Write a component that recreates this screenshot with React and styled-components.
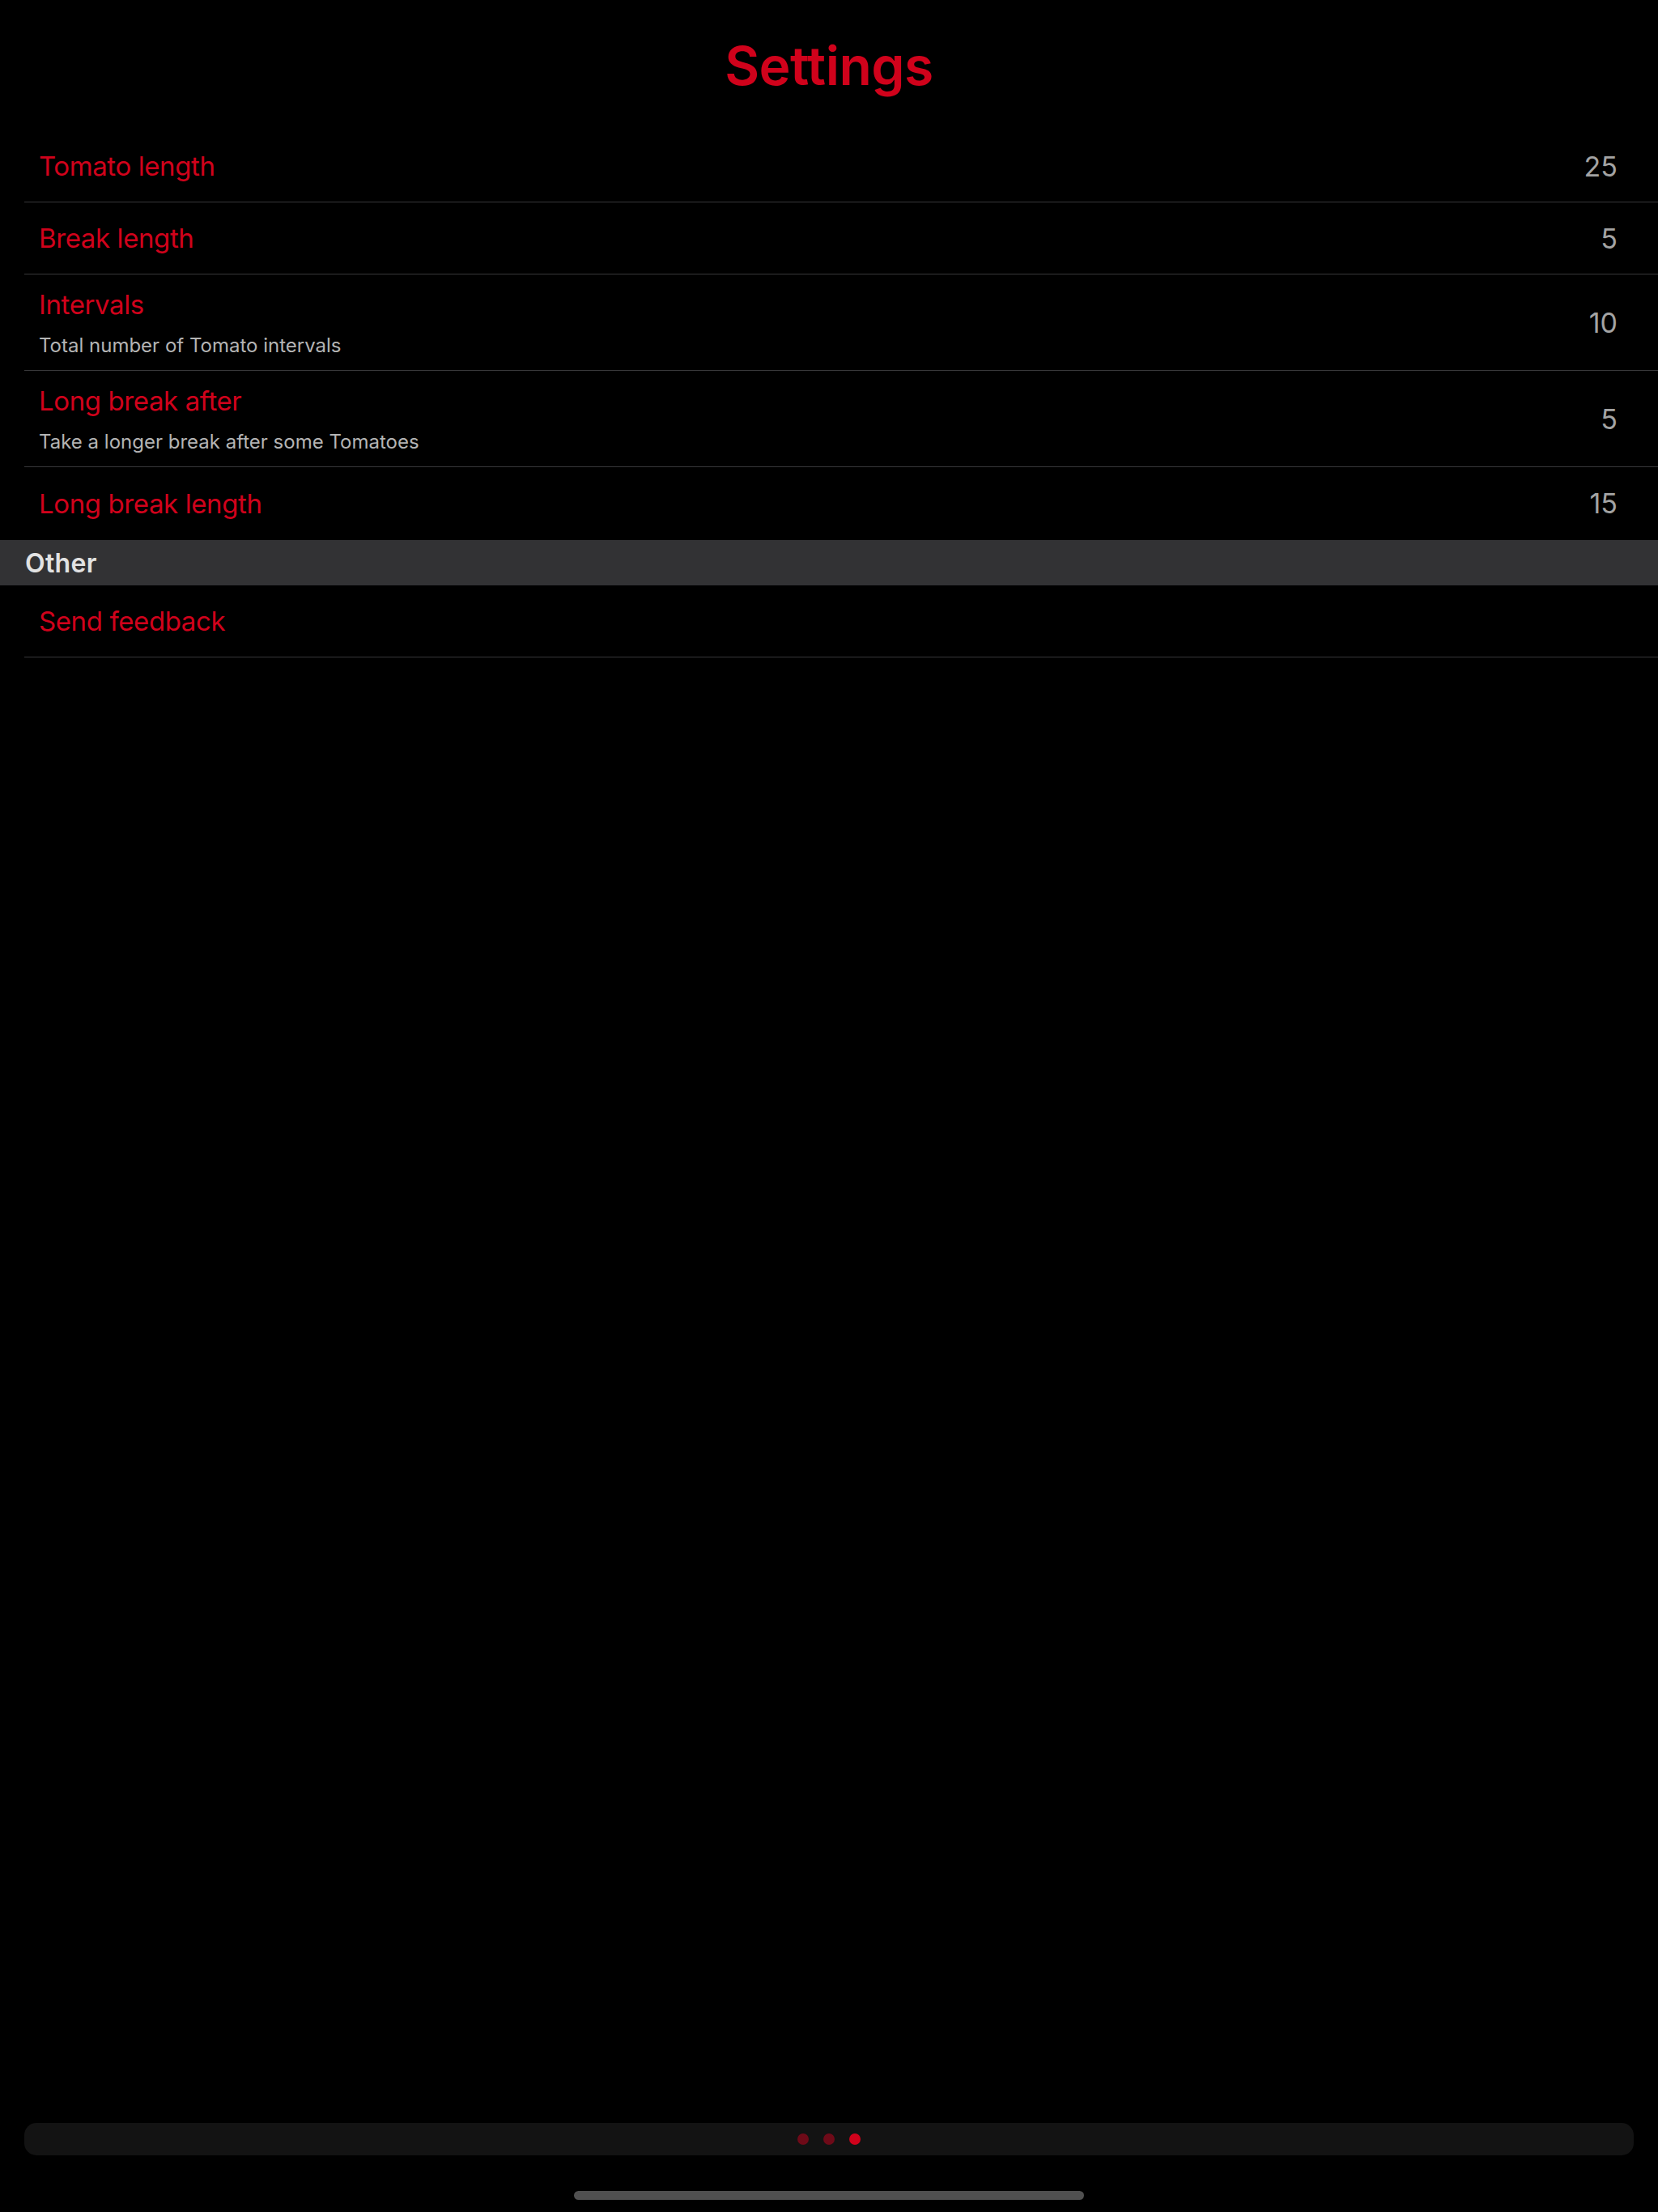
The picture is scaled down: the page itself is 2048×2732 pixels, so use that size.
import React from "react";
import styled, { createGlobalStyle } from "styled-components";

const RED = "#d0021b";

const settings = [
  { label: "Tomato length", value: 25 },
  { label: "Break length", value: 5 },
  { label: "Intervals", hint: "Total number of Tomato intervals", value: 10 },
  { label: "Long break after", hint: "Take a longer break after some Tomatoes", value: 5 },
  { label: "Long break length", value: 15 },
];

export default function App() {
  return (
    <>
      <GlobalStyle />
      <Screen>
        <TitleBar>
          <Title>Settings</Title>
        </TitleBar>

        <List>
          {settings.map((item, i) => (
            <Row key={item.label} tall={!!item.hint} last={i === settings.length - 1}>
              <Labels>
                <Label>{item.label}</Label>
                {item.hint && <Hint>{item.hint}</Hint>}
              </Labels>
              <Value>{item.value}</Value>
            </Row>
          ))}
        </List>

        <SectionHeader>Other</SectionHeader>
        <List>
          <Row>
            <Labels>
              <Label>Send feedback</Label>
            </Labels>
          </Row>
        </List>

        <Spacer />

        <PageBar>
          <Dot />
          <Dot />
          <Dot active />
        </PageBar>
        <HomeArea>
          <HomeIndicator />
        </HomeArea>
      </Screen>
    </>
  );
}

const GlobalStyle = createGlobalStyle`
  * { box-sizing: border-box; }
  html, body {
    margin: 0;
    padding: 0;
    background: #000;
  }
  body {
    font-family: Inter, "Noto Sans", sans-serif;
    -webkit-font-smoothing: antialiased;
  }
`;

const Screen = styled.div`
  display: flex;
  flex-direction: column;
  min-height: 2732px;
  background: #000;
`;

const TitleBar = styled.header`
  height: 161px;
  display: flex;
  align-items: center;
  justify-content: center;
`;

const Title = styled.h1`
  margin: 0;
  font-size: 66px;
  font-weight: 600;
  letter-spacing: -0.5px;
  color: ${RED};
`;

const List = styled.div`
  display: flex;
  flex-direction: column;
  padding-left: 30px;
`;

/* the row above a section header has no visible divider, just one extra pixel */
const Row = styled.div`
  display: flex;
  align-items: center;
  justify-content: space-between;
  height: ${(p) => (p.tall ? 119 : p.last ? 90 : 89)}px;
  padding: 0 50px 0 18px;
  border-bottom: 1px solid ${(p) => (p.last ? "transparent" : "#38383a")};
`;

const Labels = styled.div`
  display: flex;
  flex-direction: column;
  gap: 16px;
`;

const Label = styled.span`
  font-size: 33px;
  color: ${RED};
  letter-spacing: -0.4px;
`;

const Hint = styled.span`
  font-size: 24px;
  color: #b4b4b4;
`;

const Value = styled.span`
  font-size: 34px;
  color: #a3a3a3;
`;

const SectionHeader = styled.div`
  height: 56px;
  display: flex;
  align-items: center;
  padding-left: 31px;
  background: #323234;
  color: #e2e2e2;
  font-size: 32px;
  font-weight: 600;
  letter-spacing: 0.3px;
`;

const Spacer = styled.div`
  flex: 1;
`;

const PageBar = styled.div`
  margin: 0 30px;
  height: 40px;
  border-radius: 15px;
  background: #131313;
  display: flex;
  align-items: center;
  justify-content: center;
  gap: 18px;
`;

const Dot = styled.span`
  width: 14px;
  height: 14px;
  border-radius: 50%;
  background: ${(p) => (p.active ? RED : "#6e0a18")};
`;

const HomeArea = styled.div`
  height: 70px;
  display: flex;
  justify-content: center;
  padding-top: 44px;
`;

const HomeIndicator = styled.div`
  width: 630px;
  height: 11px;
  border-radius: 6px;
  background: #505050;
`;
